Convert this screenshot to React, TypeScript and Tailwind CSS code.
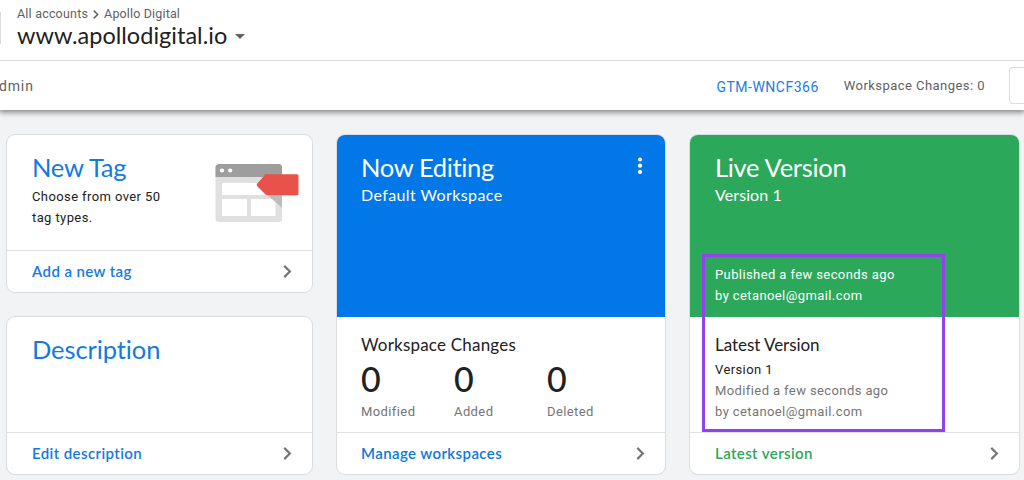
import type { ReactNode } from "react";

const Chevron = ({ className = "" }: { className?: string }) => (
  <svg viewBox="0 0 8 12" className={className} fill="none" stroke="currentColor" strokeWidth="2">
    <path d="M1 0.8 6.2 6 1 11.2" />
  </svg>
);

const MoreDots = () => (
  <svg width="6" height="18" viewBox="0 0 6 18" fill="currentColor" className="mt-[6px]">
    <circle cx="3" cy="2.500" r="2.100" />
    <circle cx="3" cy="8.700" r="2.100" />
    <circle cx="3" cy="14.900" r="2.100" />
  </svg>
);

const TagArt = () => (
  <svg width="84" height="60" viewBox="0 0 84 60" className="shrink-0">
    <rect x="0.5" y="0" width="66.5" height="58" rx="3.5" fill="#e0e0e0" />
    <path d="M0.5 13V3.5A3.5 3.5 0 0 1 4 0h59.500a3.500 3.500 0 0 1 3.500 3.500V13z" fill="#9e9e9e" />
    <circle cx="7" cy="6.500" r="2.100" fill="#fff" />
    <circle cx="15.200" cy="6.500" r="2.100" fill="#fff" />
    <path d="M7 19h53.500v12H7zM7 35h25v17H7zM36 35h24.500v17H36z" fill="#fff" />
    <path d="M52 30.500 67 44V30z" fill="#bdbdbd" />
    <path d="M49.500 10.200H82a1.500 1.500 0 0 1 1.500 1.500v18a1.500 1.500 0 0 1-1.500 1.500H52.500a3 3 0 0 1-2-.8l-8-8a2.200 2.200 0 0 1 0-3.200l7-7.800z" fill="#e8524a" />
  </svg>
);

type CardProps = {
  className?: string;
  footer: string;
  footerClass: string;
  children: ReactNode;
};

const Card = ({ className = "", footer, footerClass, children }: CardProps) => (
  <section className={`flex flex-col overflow-hidden rounded-[9px] border border-[#dadce0] bg-white ${className}`}>
    <div className="flex min-h-0 flex-1 flex-col">{children}</div>
    <div className="flex h-[42px] shrink-0 items-center justify-between border-t border-[#dfe1e5] pr-[20px] pl-[25px]">
      <span className={`mb-[2px] font-[Lato] text-[15px] leading-5 font-semibold ${footerClass}`}>{footer}</span>
      <Chevron className="h-[13px] w-[9px] text-[#757575]" />
    </div>
  </section>
);

const stats = [
  { label: "Modified", value: 0 },
  { label: "Added", value: 0 },
  { label: "Deleted", value: 0 },
];

const App = () => {
  return (
    <div className="h-[480px] w-[1024px] overflow-hidden bg-[#f1f3f4] font-[Roboto,sans-serif] text-[13px] tracking-[0.4px] text-[#212121]">
      <header className="relative h-[110px] bg-white shadow-[0_1px_6px_1px_rgba(0,0,0,0.5)]">
        <div className="flex h-[61px] border-b border-[#dadce0]">
          <div className="mt-3 h-8 w-px bg-[#dadce0]" />
          <div className="pt-[6px] pl-4">
            <div className="flex items-center text-[12.5px] leading-4 text-[#616161]">
              <span className="tracking-[0.2px]">All accounts</span>
              <Chevron className="mx-[5px] h-[9px] w-[6px]" />
              <span className="tracking-[0.15px]">Apollo Digital</span>
            </div>
            <div className="-mt-[2px] flex items-center">
              <h1 className="font-[Lato] text-[23.5px] leading-[30px] tracking-[0.02px]">www.apollodigital.io</h1>
              <span className="mt-[3px] ml-2 border-x-[5px] border-t-[5px] border-x-transparent border-t-[#616161]" />
            </div>
          </div>
        </div>
        <div className="flex h-[49px] items-center text-[#616161]">
          <span className="mt-[2px] -ml-px text-[14px] tracking-[0.85px]">dmin</span>
          <span className="mt-[3px] ml-auto text-[14px] tracking-[0.5px] text-[#1a7de0]">GTM-WNCF366</span>
          <span className="ml-[25px] tracking-[0.45px]">Workspace Changes: 0</span>
          <div className="ml-6 h-[37px] w-[15px] rounded-l border border-r-0 border-[#dadce0]" />
        </div>
      </header>

      <main className="flex pt-6 pl-[6px]">
        <div className="flex w-[307px] flex-col gap-[23px]">
          <Card className="h-[159px]" footer="Add a new tag" footerClass="text-[#137ae0]">
            <div className="flex justify-between pt-4 pr-[13px] pl-[25px]">
              <div>
                <h2 className="font-[Lato] text-[25.5px] leading-8 tracking-[-0.2px] text-[#137ae0]">New Tag</h2>
                <p className="mt-[3px] leading-[21px] tracking-[0.4px]">
                  Choose from over 50
                  <br />
                  tag types.
                </p>
              </div>
              <div className="pt-[13px]">
                <TagArt />
              </div>
            </div>
          </Card>
          <Card className="h-[159px]" footer="Edit description" footerClass="text-[#137ae0]">
            <h2 className="pt-4 pl-[25px] font-[Lato] text-[25.5px] leading-8 tracking-[-0.1px] text-[#137ae0]">
              Description
            </h2>
          </Card>
        </div>

        <Card className="ml-[23px] h-[341px] w-[330px]" footer="Manage workspaces" footerClass="-ml-px text-[#0b78e3]">
          <div className="-mx-px -mt-px flex h-[183px] shrink-0 justify-between bg-[#0277e8] pt-[17px] pr-[23px] pl-[25px] text-white">
            <div className="font-[Lato]">
              <h2 className="text-[25.5px] leading-8 tracking-[-0.35px]">Now Editing</h2>
              <p className="text-[16px] leading-6">Default Workspace</p>
            </div>
            <MoreDots />
          </div>
          <div className="pt-4 pl-6">
            <h3 className="font-[Lato] text-[17px] leading-6 tracking-[0.2px]">Workspace Changes</h3>
            <div className="flex">
              {stats.map((s) => (
                <div key={s.label} className="w-[93px]">
                  <div className="font-[Lato] text-[34px] leading-[44px] font-medium">{s.value}</div>
                  <div className="mt-px leading-5 text-[#757575]">{s.label}</div>
                </div>
              ))}
            </div>
          </div>
        </Card>

        <div className="relative ml-[23px]">
          <Card className="h-[341px] w-[331px]" footer="Latest version" footerClass="text-[#2aa75a]">
            <div className="-mx-px -mt-px flex h-[183px] shrink-0 flex-col justify-between bg-[#2ba85a] pt-[17px] pb-[11px] pl-[26px] text-white">
              <div className="font-[Lato]">
                <h2 className="text-[25.5px] leading-8 tracking-[-0.3px]">Live Version</h2>
                <p className="text-[16px] leading-6 tracking-[0.1px]">Version 1</p>
              </div>
              <p className="leading-[21px] tracking-[0.4px]">
                Published a few seconds ago
                <br />
                by cetanoel@gmail.com
              </p>
            </div>
            <div className="pt-4 pl-[25px] leading-[21px] tracking-[0.4px] text-[#757575]">
              <h3 className="font-[Lato] text-[17px] leading-6 tracking-[-0.05px] text-[#212121]">Latest Version</h3>
              <p className="mt-[2px] text-[#212121]">Version 1</p>
              <p>Modified a few seconds ago</p>
              <p>by cetanoel@gmail.com</p>
            </div>
          </Card>
          <div className="pointer-events-none absolute top-[120px] left-[13px] h-[178px] w-[243px] border-[3px] border-[#8e44e8]" />
        </div>
      </main>
    </div>
  );
};

export default App;
